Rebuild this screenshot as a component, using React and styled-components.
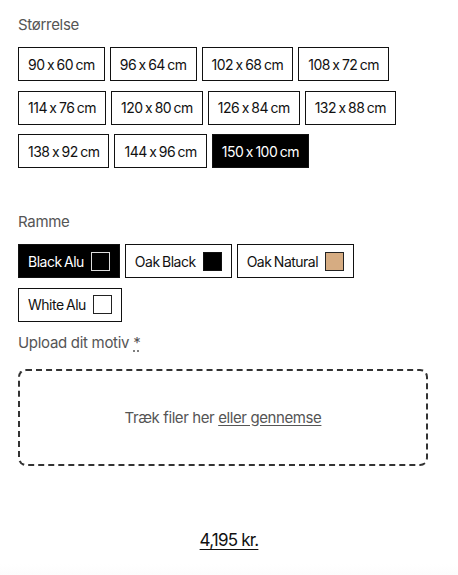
import React, { useState } from 'react'
import styled, { createGlobalStyle } from 'styled-components'

const GlobalStyle = createGlobalStyle`
  html, body {
    margin: 0;
    padding: 0;
    background: #fff;
  }
  body {
    font-family: Inter, "Liberation Sans", Arial, sans-serif;
    color: #111;
    -webkit-font-smoothing: antialiased;
  }
`

const sizes = [
  '90 x 60 cm', '96 x 64 cm', '102 x 68 cm', '108 x 72 cm',
  '114 x 76 cm', '120 x 80 cm', '126 x 84 cm', '132 x 88 cm',
  '138 x 92 cm', '144 x 96 cm', '150 x 100 cm',
]

const frames = [
  { name: 'Black Alu', swatch: '#000', edge: '#fff' },
  { name: 'Oak Black', swatch: '#000', edge: '#111' },
  { name: 'Oak Natural', swatch: '#d6ac82', edge: '#222' },
  { name: 'White Alu', swatch: '#fff', edge: '#222' },
]

export default function App() {
  const [size, setSize] = useState('150 x 100 cm')
  const [frame, setFrame] = useState('Black Alu')

  return (
    <>
      <GlobalStyle />
      <Page>
        <Label>Størrelse</Label>
        <OptionGrid>
          {sizes.map(s => (
            <Option key={s} selected={s === size} onClick={() => setSize(s)}>
              {s}
            </Option>
          ))}
        </OptionGrid>

        <Label spaced>Ramme</Label>
        <OptionGrid>
          {frames.map(f => (
            <Option key={f.name} selected={f.name === frame} onClick={() => setFrame(f.name)}>
              {f.name}
              <Swatch
                fill={f.swatch}
                edge={f.name === frame ? '#ddd' : f.edge}
              />
            </Option>
          ))}
        </OptionGrid>

        <UploadLabel>
          Upload dit motiv <abbr title="påkrævet">*</abbr>
        </UploadLabel>
        <DropZone>
          <DropText>
            Træk filer her <BrowseLink href="#">eller gennemse</BrowseLink>
          </DropText>
        </DropZone>

        <Price href="#">4,195 kr.</Price>
        <BottomFade />
      </Page>
    </>
  )
}

const Page = styled.div`
  padding: 16px 30px 0 18px;
  display: flex;
  flex-direction: column;
`

const Label = styled.div`
  font-size: 15px;
  line-height: 18px;
  color: #555;
  letter-spacing: -0.3px;
  margin-top: ${({ spaced }) => (spaced ? '45px' : '0')};
  margin-bottom: 13px;
`

const OptionGrid = styled.div`
  display: flex;
  flex-wrap: wrap;
  column-gap: 5px;
  row-gap: 9.5px;
`

const Option = styled.button`
  display: inline-flex;
  align-items: center;
  gap: 7px;
  height: 34px;
  box-sizing: border-box;
  padding: 0 9px;
  border: 1.5px solid #111;
  border-radius: 0;
  background: ${({ selected }) => (selected ? '#000' : '#fff')};
  color: ${({ selected }) => (selected ? '#fff' : '#111')};
  font-family: Inter, "Liberation Sans", Arial, sans-serif;
  font-size: 14px;
  font-weight: 400;
  letter-spacing: -0.5px;
  word-spacing: -1px;
  cursor: pointer;
`

const Swatch = styled.span`
  display: inline-block;
  width: 19px;
  height: 19px;
  box-sizing: border-box;
  background: ${({ fill }) => fill};
  border: 1.5px solid ${({ edge }) => edge};
`

const UploadLabel = styled(Label)`
  margin-top: 12px;
  margin-bottom: 17px;

  abbr {
    text-decoration: underline dotted;
    text-underline-offset: 3px;
    cursor: help;
  }
`

const DropZone = styled.div`
  height: 97px;
  box-sizing: border-box;
  border: 2px dashed #333;
  border-radius: 8px;
  display: flex;
  align-items: center;
  justify-content: center;
`

const DropText = styled.span`
  font-size: 15px;
  color: #555;
  letter-spacing: -0.4px;
`

const BrowseLink = styled.a`
  color: #555;
  text-decoration: underline;
  text-underline-offset: 2px;
`

const Price = styled.a`
  align-self: center;
  margin-top: 64px;
  margin-left: 12px;
  font-size: 17px;
  line-height: 20px;
  color: #111;
  letter-spacing: -0.8px;
  text-decoration: underline;
  text-underline-offset: 3px;
`

const BottomFade = styled.div`
  margin-top: 14px;
  margin-left: -18px;
  margin-right: -30px;
  height: 30px;
  background: linear-gradient(#fff, #f7f7f7);
`
